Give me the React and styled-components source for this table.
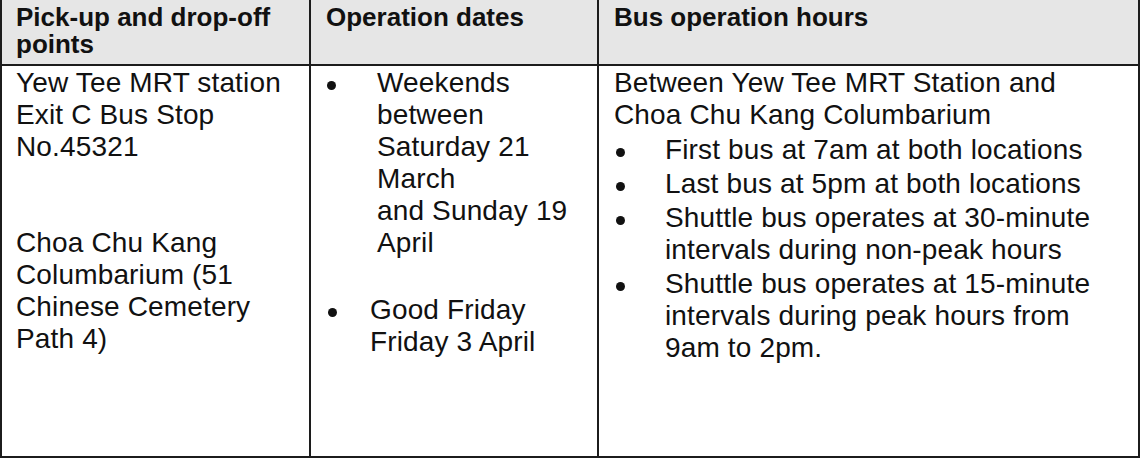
import React from 'react';
import styled, { createGlobalStyle } from 'styled-components';

const Global = createGlobalStyle`
  html, body { margin: 0; padding: 0; background: #fff; }
  body { font-family: "Liberation Sans", Arial, sans-serif; color: #111; }
  #root { width: 1140px; height: 458px; overflow: hidden; }
`;

const LINE = '#1c1c1c';

const Table = styled.div`
  box-sizing: border-box;
  width: 1140px;
  height: 458px;
  display: grid;
  grid-template-columns: 309px 288px 1fr;
  grid-template-rows: 66px 1fr;
  border-left: 2px solid ${LINE};
  border-right: 2px solid ${LINE};
  border-bottom: 2px solid ${LINE};
`;

const HeadCell = styled.div`
  box-sizing: border-box;
  background: #e6e6e6;
  border-bottom: 2px solid ${LINE};
  border-right: ${(p) => (p.$last ? 'none' : `2px solid ${LINE}`)};
  padding: 4px 10px 0 ${(p) => p.$pad}px;
  font-weight: 700;
  font-size: 26px;
  line-height: 27px;
`;

const Cell = styled.div`
  box-sizing: border-box;
  border-right: ${(p) => (p.$last ? 'none' : `2px solid ${LINE}`)};
  padding: 1px ${(p) => p.$right || 6}px 0 ${(p) => p.$pad}px;
  font-size: 28px;
  letter-spacing: 0.15px;
  line-height: 32px;
`;

const Para = styled.p`
  margin: 0 0 ${(p) => p.$gap || 0}px;
`;

const List = styled.ul`
  list-style: none;
  margin: ${(p) => p.$top || 0}px 0 0;
  padding: 0;
`;

const Item = styled.li`
  display: flex;
  margin: 0 0 ${(p) => p.$gap || 0}px ${(p) => p.$offset || 0}px;
`;

const Marker = styled.span`
  flex: 0 0 ${(p) => p.$w}px;
  display: flex;
  align-items: flex-start;
`;

const Dot = styled.span`
  width: 9px;
  height: 9px;
  margin: 14px 0 0 2px;
  border-radius: 50%;
  background: #111;
`;

const Text = styled.span`
  flex: 1;
`;

const Bullet = ({ w, offset, gap, children }) => (
  <Item $offset={offset} $gap={gap}>
    <Marker $w={w}>
      <Dot />
    </Marker>
    <Text>{children}</Text>
  </Item>
);

export default function App() {
  return (
    <>
      <Global />
      <Table>
        <HeadCell $pad={14}>Pick-up and drop-off points</HeadCell>
        <HeadCell $pad={15}>Operation dates</HeadCell>
        <HeadCell $pad={15} $last>Bus operation hours</HeadCell>

        <Cell $pad={14}>
          <Para $gap={64}>
            Yew Tee MRT station
            <br />
            Exit C Bus Stop
            <br />
            No.45321
          </Para>
          <Para>
            Choa Chu Kang Columbarium (51 Chinese Cemetery Path 4)
          </Para>
        </Cell>

        <Cell $pad={14}>
          <List>
            <Bullet w={52} gap={35}>
              Weekends between Saturday 21 March
              <br />
              and Sunday 19 April
            </Bullet>
            <Bullet w={44} offset={1}>
              Good Friday
              <br />
              Friday 3 April
            </Bullet>
          </List>
        </Cell>

        <Cell $pad={15} $right={38} $last>
          <Para>
            Between Yew Tee MRT Station and
            <br />
            Choa Chu Kang Columbarium
          </Para>
          <List $top={3}>
            <Bullet w={51} gap={2}>First bus at 7am at both locations</Bullet>
            <Bullet w={51} gap={2}>Last bus at 5pm at both locations</Bullet>
            <Bullet w={51} gap={2}>
              Shuttle bus operates at 30-minute intervals during non-peak hours
            </Bullet>
            <Bullet w={51}>
              Shuttle bus operates at 15-minute intervals during peak hours from
              9am to 2pm.
            </Bullet>
          </List>
        </Cell>
      </Table>
    </>
  );
}
